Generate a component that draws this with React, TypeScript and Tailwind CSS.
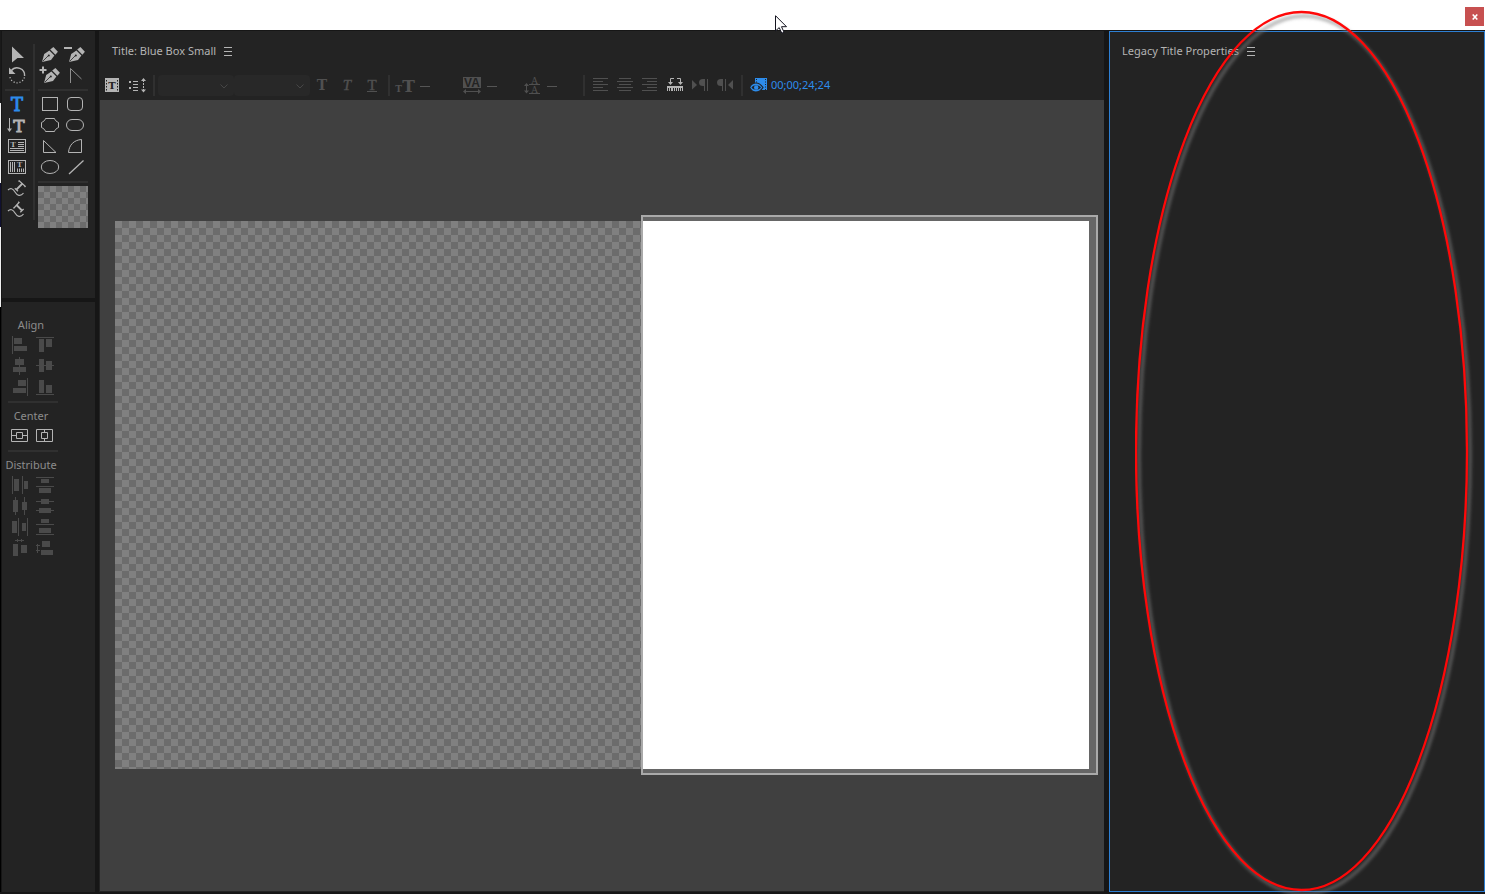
import React from "react";

type Box = [number, number, number, number];

const SERIF = "'DejaVu Serif', serif";

function Icon({ children }: { children: React.ReactNode }) {
  return (
    <svg width="25" height="21" viewBox="0 0 25 21" fill="none" stroke="none" className="block" aria-hidden="true">
      {children}
    </svg>
  );
}

function Tool({ label, className = "text-[#b4b4b4]", children }: { label: string; className?: string; children: React.ReactNode }) {
  return (
    <button type="button" aria-label={label} title={label} className={`block h-[21px] w-[25px] shrink-0 ${className}`}>
      <Icon>{children}</Icon>
    </button>
  );
}

function Boxes({ items }: { items: Box[] }) {
  return (
    <g fill="currentColor" shapeRendering="crispEdges">
      {items.map(([x, y, w, h], i) => (
        <rect key={i} x={x} y={y} width={w} height={h} />
      ))}
    </g>
  );
}

function Glyph({ x, y, size, children, ...rest }: { x: number; y: number; size: number; children: string } & React.SVGProps<SVGTextElement>) {
  return (
    <text x={x} y={y} fontSize={size} fontFamily={SERIF} fontWeight="bold" textAnchor="middle" fill="currentColor" {...rest}>
      {children}
    </text>
  );
}

function Nib({ x = 0 }: { x?: number }) {
  return (
    <g transform={`translate(${x} 0)`}>
      <path d="M4 18 6.2 10 11.4 6.4 16.4 11.4 13 16Z" fill="currentColor" />
      <path d="M12.2 5.4 15.4 3 19.9 7.800 17.400 10.800Z" fill="currentColor" />
      <path d="M4.600 17.400 10.400 11.600" stroke="#232323" strokeWidth="0.800" />
      <circle cx="10.800" cy="11.400" r="1" fill="#232323" />
    </g>
  );
}

function Menu({ label }: { label: string }) {
  return (
    <button type="button" aria-label={label} className="text-[#b4b4b4]">
      <svg width="9" height="9" viewBox="0 0 9 9" aria-hidden="true" className="block">
        <path d="M0 .5h8M0 4.5h8M0 8.5h8" stroke="currentColor" />
      </svg>
    </button>
  );
}

function PanelTitle({ title }: { title: string }) {
  return (
    <div className="flex h-10 shrink-0 items-center gap-2 text-[#b4b4b4]">
      <h2 className="whitespace-nowrap">{title}</h2>
      <Menu label={`${title} menu`} />
    </div>
  );
}

const HRule = () => <div className="my-[3px] h-0.5 bg-[#303030]" />;
const VRule = () => <div className="mx-[3px] h-[21px] w-0.5 shrink-0 bg-[#303030]" />;

function TextTools() {
  return (
    <div className="w-[25px]">
      <Tool label="Selection tool">
        <path d="M7 2.5 19 14H12.5L7 18.5Z" fill="currentColor" />
      </Tool>
      <Tool label="Rotation tool">
        <path d="M6.2 5.8A7.5 7.5 0 0 1 19.6 11" stroke="currentColor" strokeWidth="1.4" />
        <path d="M19.4 12.4A7.5 7.5 0 0 1 4.8 11.5" stroke="currentColor" strokeWidth="1.3" strokeDasharray="1.2 1.8" />
        <path d="M4 2.5V9H10.5Z" fill="currentColor" />
      </Tool>
      <HRule />
      <Tool label="Type tool" className="text-[#2d8ceb]">
        <Glyph x={12} y={17} size={18} fontWeight="normal" stroke="currentColor" strokeWidth="0.9">T</Glyph>
      </Tool>
      <Tool label="Vertical type tool">
        <path d="M4.5 3V15" stroke="currentColor" />
        <path d="M2 13.5H7L4.5 17Z" fill="currentColor" />
        <Glyph x={14} y={17} size={17} fontWeight="normal" stroke="currentColor" strokeWidth="0.9">T</Glyph>
      </Tool>
      <Tool label="Area type tool">
        <rect x="3.5" y="3.5" width="17" height="13" stroke="currentColor" />
        <Glyph x={8} y={11} size={7}>T</Glyph>
        <path d="M13 6.5h6M13 8.5h6M13 10.5h6M5 12.5h14M5 14.5h14" stroke="currentColor" />
      </Tool>
      <Tool label="Vertical area type tool">
        <rect x="3.5" y="3.5" width="17" height="13" stroke="currentColor" />
        <path d="M5.5 5v10M7.5 5v10M9.5 5v10M12.5 11.5v3.5M14.5 11.5v3.5M16.5 11.5v3.5M18.5 11.5v3.5" stroke="currentColor" />
        <Glyph x={14.5} y={10} size={7}>T</Glyph>
      </Tool>
      <Tool label="Path type tool">
        <path d="M3 12C5.500 9.500 8 10.500 10 14S15.500 19 18.500 15" stroke="currentColor" strokeWidth="1.200" />
        <path d="M11.500 11.500 17.500 5.500" stroke="currentColor" strokeWidth="1.800" />
        <path d="M13.500 3.500 14.200 2.800 20.200 8.200 19.500 9M9.800 10.300 13 13.300" stroke="currentColor" strokeWidth="1.300" />
      </Tool>
      <Tool label="Vertical path type tool">
        <path d="M3 12C5.500 9.500 8 10.500 10 14S15.500 19 18.500 15" stroke="currentColor" strokeWidth="1.200" />
        <path d="M17 11.500 11.500 6" stroke="currentColor" strokeWidth="1.800" />
        <path d="M8.500 8.300 9 9 14 3.500 13.200 2.800M15.300 13.300 18.600 10" stroke="currentColor" strokeWidth="1.300" />
      </Tool>
    </div>
  );
}

function ShapeTools() {
  return (
    <div className="w-[50px]">
      <div className="grid grid-cols-2">
        <Tool label="Pen tool">
          <Nib />
        </Tool>
        <Tool label="Delete anchor point tool">
          <path d="M1 4H9" stroke="currentColor" strokeWidth="2" />
          <Nib x={2} />
        </Tool>
        <Tool label="Add anchor point tool">
          <path d="M1.500 5H8.500M5 1.500V8.500" stroke="currentColor" strokeWidth="2" />
          <Nib x={2} />
        </Tool>
        <Tool label="Convert anchor point tool">
          <path d="M7.500 18V3.500L18.500 14" stroke="#8f8f8f" />
        </Tool>
      </div>
      <HRule />
      <div className="grid grid-cols-2">
        <Tool label="Rectangle tool">
          <rect x="4.5" y="3.5" width="15" height="13" stroke="currentColor" />
        </Tool>
        <Tool label="Rounded corner rectangle tool">
          <rect x="4.5" y="3.5" width="15" height="13" rx="3.5" stroke="currentColor" />
        </Tool>
        <Tool label="Clipped corner rectangle tool">
          <path d="M7.500 3.500h9C17 5.500 18.500 6.500 20.500 7.500v5C18.500 13.500 17 14.500 16.500 16.500h-9C7 14.500 5.500 13.500 3.500 12.500v-5C5.500 6.500 7 5.500 7.500 3.500Z" stroke="currentColor" />
        </Tool>
        <Tool label="Rounded rectangle tool">
          <rect x="3.5" y="4.5" width="17" height="11" rx="5.5" stroke="currentColor" />
        </Tool>
        <Tool label="Wedge tool">
          <path d="M5.500 4.500V16.500H18Z" stroke="currentColor" />
        </Tool>
        <Tool label="Arc tool">
          <path d="M5.500 16.500H18.500V3.500C11 4 6 9 5.500 16.500Z" stroke="currentColor" />
        </Tool>
        <Tool label="Ellipse tool">
          <ellipse cx="12" cy="10" rx="8.700" ry="6.500" stroke="currentColor" />
        </Tool>
        <Tool label="Line tool">
          <path d="M6 17 20.500 3.500" stroke="currentColor" strokeWidth="1.300" />
        </Tool>
      </div>
      <HRule />
      <div className="h-[42px] bg-[#808080] bg-[conic-gradient(#808080_25%,#6c6c6c_0_50%,#808080_0_75%,#6c6c6c_0)] bg-[length:12px_12px] bg-[position:6px_0px]" />
    </div>
  );
}

const ALIGN: [string, Box[]][] = [
  ["Align left", [[4, 2, 1, 18], [6, 4, 8, 6], [6, 12, 13, 5]]],
  ["Align top", [[3, 3, 18, 1], [6, 5, 5, 13], [13, 5, 6, 8]]],
  ["Align horizontal center", [[11, 2, 1, 18], [7, 4, 9, 6], [5, 12, 13, 5]]],
  ["Align vertical center", [[3, 10, 18, 1], [6, 4, 5, 13], [13, 6, 6, 9]]],
  ["Align right", [[19, 2, 1, 18], [10, 4, 8, 6], [5, 12, 13, 5]]],
  ["Align bottom", [[3, 18, 18, 1], [6, 4, 5, 13], [13, 9, 6, 8]]],
];

const DISTRIBUTE: [string, Box[]][] = [
  ["Distribute left", [[4, 2, 1, 18], [6, 5, 5, 12], [14, 2, 1, 18], [16, 7, 4, 8]]],
  ["Distribute top", [[3, 3, 18, 1], [8, 5, 8, 4], [3, 12, 18, 1], [6, 14, 12, 5]]],
  ["Distribute horizontal center", [[7, 2, 1, 18], [5, 5, 5, 12], [16, 2, 1, 18], [14, 7, 5, 8]]],
  ["Distribute vertical center", [[3, 6, 18, 1], [8, 4, 8, 5], [3, 15, 18, 1], [6, 13, 12, 5]]],
  ["Distribute right", [[10, 2, 1, 18], [4, 5, 5, 12], [19, 2, 1, 18], [14, 7, 4, 8]]],
  ["Distribute bottom", [[8, 3, 8, 4], [3, 8, 18, 1], [6, 12, 12, 5], [3, 18, 18, 1]]],
  ["Distribute horizontal even spacing", [[7, 3, 9, 1], [9, 2, 1, 3], [13, 2, 1, 3], [5, 7, 5, 12], [13, 8, 6, 8]]],
  ["Distribute vertical even spacing", [[4, 7, 1, 9], [3, 8, 4, 1], [3, 13, 4, 1], [9, 4, 8, 6], [8, 13, 12, 5]]],
];

function Heading({ children }: { children: string }) {
  return <h3 className="-ml-0.5 flex h-[18px] w-[50px] items-center justify-center whitespace-nowrap text-[#8c8c8c]">{children}</h3>;
}

function ArrangePanel() {
  return (
    <section aria-label="Align and distribute" className="flex-1 bg-[#232323] pt-3.5 pl-1.5">
      <div className="w-[50px]">
        <Heading>Align</Heading>
        <div className="grid grid-cols-2">
          {ALIGN.map(([label, items]) => (
            <Tool key={label} label={label} className="text-[#4a4a4a]">
              <Boxes items={items} />
            </Tool>
          ))}
        </div>
        <div className="my-1 h-0.5 bg-[#303030]" />
        <Heading>Center</Heading>
        <div className="grid grid-cols-2">
          <Tool label="Center vertically">
            <path d="M3.500 4.500h16v12h-16ZM8.500 7.500h6v6h-6ZM4 10.500h4M15 10.500h4" stroke="currentColor" />
          </Tool>
          <Tool label="Center horizontally">
            <path d="M3.500 4.500h16v12h-16ZM8.500 7.500h6v6h-6ZM11.500 5v2M11.500 14v2" stroke="currentColor" />
          </Tool>
        </div>
        <div className="my-1 h-0.5 bg-[#303030]" />
        <Heading>Distribute</Heading>
        <div className="grid grid-cols-2">
          {DISTRIBUTE.map(([label, items]) => (
            <Tool key={label} label={label} className="text-[#4a4a4a]">
              <Boxes items={items} />
            </Tool>
          ))}
        </div>
      </div>
    </section>
  );
}

function FontSelect({ label }: { label: string }) {
  return (
    <label className="relative block h-[21px] w-[76px] shrink-0 rounded-sm bg-[#282828]">
      <select aria-label={label} className="block h-full w-full appearance-none bg-transparent outline-none">
        <option></option>
      </select>
      <svg width="8" height="5" viewBox="0 0 8 5" className="pointer-events-none absolute top-[9px] right-1.5" fill="none" aria-hidden="true">
        <path d="M.5.5 4 4 7.500.500" stroke="#464646" />
      </svg>
    </label>
  );
}

function ValueField({ label, className = "" }: { label: string; className?: string }) {
  return (
    <button type="button" aria-label={label} className={`flex h-[21px] shrink-0 items-center pl-0.5 ${className}`}>
      <span className="mt-0.5 block h-px w-2.5 bg-[#555555]" />
    </button>
  );
}

const DIM = "text-[#505050]";

function Toolbar() {
  return (
    <div className="ml-px flex h-[29px] shrink-0 items-center">
      <Tool label="New title based on current title">
        <rect x="5" y="3" width="14" height="14" fill="currentColor" />
        <path d="M6.500 5V16M17.500 5V16" stroke="#232323" strokeDasharray="1.500 1.500" />
        <Glyph x={12} y={14} size={10} fill="#232323">T</Glyph>
      </Tool>
      <Tool label="Roll/crawl options">
        <path d="M4 6h2v2H4ZM4 12h2v2H4Z" fill="currentColor" />
        <path d="M8 6.500h5M8 9.500h5M8 12.500h5M8 15.500h5" stroke="currentColor" />
        <path d="M18.500 5V16" stroke="currentColor" strokeDasharray="2 1" />
        <path d="M16 6h5L18.500 3ZM16 14.500h5L18.500 17.500Z" fill="currentColor" />
      </Tool>
      <VRule />
      <FontSelect label="Font family" />
      <FontSelect label="Font style" />
      <Tool label="Bold" className={DIM}>
        <Glyph x={12} y={15} size={14}>T</Glyph>
      </Tool>
      <Tool label="Italic" className={DIM}>
        <Glyph x={12} y={15} size={15} fontStyle="italic" fontWeight="normal" fontFamily="'Liberation Serif', serif" stroke="currentColor" strokeWidth="0.4">T</Glyph>
      </Tool>
      <Tool label="Underline" className={DIM}>
        <Glyph x={12} y={15} size={15} fontWeight="normal" fontFamily="'Liberation Serif', serif" stroke="currentColor" strokeWidth="0.4">T</Glyph>
        <path d="M7 16.500h10" stroke="currentColor" />
      </Tool>
      <VRule />
      <Tool label="Size" className={DIM}>
        <Glyph x={5.5} y={17} size={9}>T</Glyph>
        <Glyph x={15.5} y={17} size={17}>T</Glyph>
      </Tool>
      <ValueField label="Size value" className="w-[42px]" />
      <Tool label="Kerning" className={DIM}>
        <rect x="3" y="2" width="18" height="11" fill="currentColor" />
        <text x="12" y="12" fontSize="12" fontWeight="bold" fontFamily="'Liberation Sans', sans-serif" textAnchor="middle" fill="#232323">VA</text>
        <path d="M5 16.500h14" stroke="currentColor" />
        <path d="M3 16.500 6 14v5ZM21 16.500 18 14v5Z" fill="currentColor" />
      </Tool>
      <ValueField label="Kerning value" className="w-[35px]" />
      <Tool label="Leading" className={DIM}>
        <path d="M6.500 9v8M9 9.500h11M9 18.500h11" stroke="currentColor" />
        <path d="M4 11h5L6.500 8ZM4 15.500h5L6.500 18.500Z" fill="currentColor" />
        <Glyph x={14.5} y={9} size={10} fontWeight="normal" fontFamily="'Liberation Serif', serif">A</Glyph>
        <Glyph x={14.5} y={18} size={10} fontWeight="normal" fontFamily="'Liberation Serif', serif">A</Glyph>
      </Tool>
      <ValueField label="Leading value" className="w-[35px]" />
      <VRule />
      <Tool label="Left align" className={DIM}>
        <path d="M5 3.500h15M5 6.500h10M5 9.500h15M5 12.500h10M5 15.500h15" stroke="currentColor" />
      </Tool>
      <Tool label="Center align" className={DIM}>
        <path d="M6 3.500h12M4 6.500h16M6 9.500h12M4 12.500h16M6 15.500h12" stroke="currentColor" />
      </Tool>
      <Tool label="Right align" className={DIM}>
        <path d="M4 3.500h15M9 6.500h10M4 9.500h15M9 12.500h10M4 15.500h15" stroke="currentColor" />
      </Tool>
      <Tool label="Tab stops">
        <path d="M4 11h16v5h-1v-3h-1v3h-1v-3h-1v3h-1v-3h-1v3h-1v-3h-1v3h-1v-3h-1v3h-1v-3H9v3H8v-3H7v3H6v-3H5v3H4Z" fill="currentColor" />
        <path d="M11 3.500H7.500V8M14 3.500h3.500V8" stroke="currentColor" />
        <path d="M5 7h5L7.500 10ZM15 7h5L17.500 10Z" fill="currentColor" />
      </Tool>
      <Tool label="Left to right paragraph" className={DIM}>
        <path d="M4 5 9 10 4 14.500Z" fill="currentColor" />
        <path d="M20 4h-5a4 3.500 0 0 0 0 7h1V4" fill="currentColor" />
        <path d="M16.500 4v12M19.500 4v12" stroke="currentColor" />
      </Tool>
      <Tool label="Right to left paragraph" className={DIM}>
        <path d="M20 5 15 10 20 14.500Z" fill="currentColor" />
        <path d="M13 4H8a4 3.500 0 0 0 0 7h1V4" fill="currentColor" />
        <path d="M9.500 4v12M12.500 4v12" stroke="currentColor" />
      </Tool>
      <VRule />
      <Tool label="Show background video" className="text-[#2d8ceb]">
        <path d="M9 3H21V15H9Z" fill="currentColor" />
        <path d="M10.500 4v5M19.500 4V15" stroke="#232323" strokeDasharray="1 1.500" />
        <path d="M3.500 12.500C6.500 6.500 13 6.500 17 12.500 13 18.500 6.500 18.500 3.500 12.500Z" fill="currentColor" stroke="#232323" strokeWidth="1.200" />
        <path d="M5.500 12.500C7.500 9.500 12.500 9.500 15 12.500 12.500 15.500 7.500 15.500 5.500 12.500Z" fill="#232323" />
        <circle cx="10.200" cy="12.500" r="2.200" fill="currentColor" />
      </Tool>
      <button type="button" className="pb-0.5 whitespace-nowrap text-[#2d8ceb]">00;00;24;24</button>
    </div>
  );
}

function Stage() {
  return (
    <div className="ml-px flex flex-1 items-center bg-[#404040] px-[15px] pb-px">
      <div className="relative aspect-video w-full bg-[conic-gradient(#808080_25%,#6c6c6c_0_50%,#808080_0_75%,#6c6c6c_0)] bg-[length:14px_14px] bg-[position:7px_0px]">
        <div className="absolute -top-1.5 -right-[9px] -bottom-1.5 left-[54%] border-2 border-[#aaaaaa] bg-[#666666] py-1 pr-[7px]">
          <div className="h-full bg-white" />
        </div>
      </div>
    </div>
  );
}

function TitleBar() {
  return (
    <header className="flex h-[30px] shrink-0 justify-end bg-white pt-[7px] pr-px">
      <button type="button" aria-label="Close" className="flex h-[19px] w-[19px] items-center justify-center bg-[#c75050]">
        <svg width="6" height="6" viewBox="0 0 6 6" aria-hidden="true">
          <path d="M.700.500 5.300 5.500M5.300.500.700 5.500" stroke="#fff" strokeWidth="1.600" />
        </svg>
      </button>
    </header>
  );
}

function Marker() {
  return (
    <svg width="350" height="894" viewBox="0 0 350 894" fill="none" className="pointer-events-none absolute top-0 right-0" aria-hidden="true">
      <defs>
        <filter id="soft" x="-10%" y="-10%" width="120%" height="120%">
          <feGaussianBlur stdDeviation="1.500" />
        </filter>
      </defs>
      <ellipse cx="169.500" cy="455" rx="165.500" ry="439" stroke="#808080" strokeOpacity="0.500" strokeWidth="4" filter="url(#soft)" />
      <ellipse cx="166.500" cy="451" rx="165.500" ry="439" stroke="#ff0808" strokeWidth="2.300" />
    </svg>
  );
}

function Pointer() {
  return (
    <svg width="13" height="19" viewBox="0 0 13 19" className="pointer-events-none absolute top-[15px] left-[52.2%]" aria-hidden="true">
      <path d="M.500.700V16L4.200 12.600 6.800 18.200 9 17.200 6.500 11.700H11.500Z" fill="#fff" stroke="#14141f" />
    </svg>
  );
}

export default function App() {
  return (
    <div className="relative flex min-h-screen flex-col overflow-hidden bg-[#161616] text-[11px] leading-4" style={{ fontFamily: "'Noto Sans', sans-serif" }}>
      <TitleBar />
      <main className="flex flex-1 pt-px pb-0.5">
        <div className="mr-px flex w-px shrink-0 flex-col">
          <div className="h-[72px] bg-[#1a1a1a]" />
          <div className="h-20 bg-[#f0f0f0]" />
          <div className="h-11 bg-[#101030]" />
          <div className="h-20 bg-[#f0f0f0]" />
          <div className="flex-1 bg-black" />
        </div>
        <div className="mr-1 flex w-[93px] shrink-0 flex-col gap-1">
          <section aria-label="Title tools" className="flex h-[267px] shrink-0 gap-[3px] bg-[#232323] pt-[13px] pl-[3px]">
            <TextTools />
            <div className="h-44 w-0.5 bg-[#303030]" />
            <ShapeTools />
          </section>
          <ArrangePanel />
        </div>
        <section aria-label="Title" className="mr-[5px] flex min-w-0 flex-1 flex-col bg-[#232323] pb-px">
          <div className="pl-[13px]">
            <PanelTitle title="Title: Blue Box Small" />
          </div>
          <Toolbar />
          <Stage />
        </section>
        <section aria-label="Title properties" className="w-[376px] shrink-0 border border-[#2d7fd3] bg-[#232323] pl-3">
          <div className="-mt-px">
            <PanelTitle title="Legacy Title Properties" />
          </div>
        </section>
      </main>
      <Marker />
      <Pointer />
    </div>
  );
}
